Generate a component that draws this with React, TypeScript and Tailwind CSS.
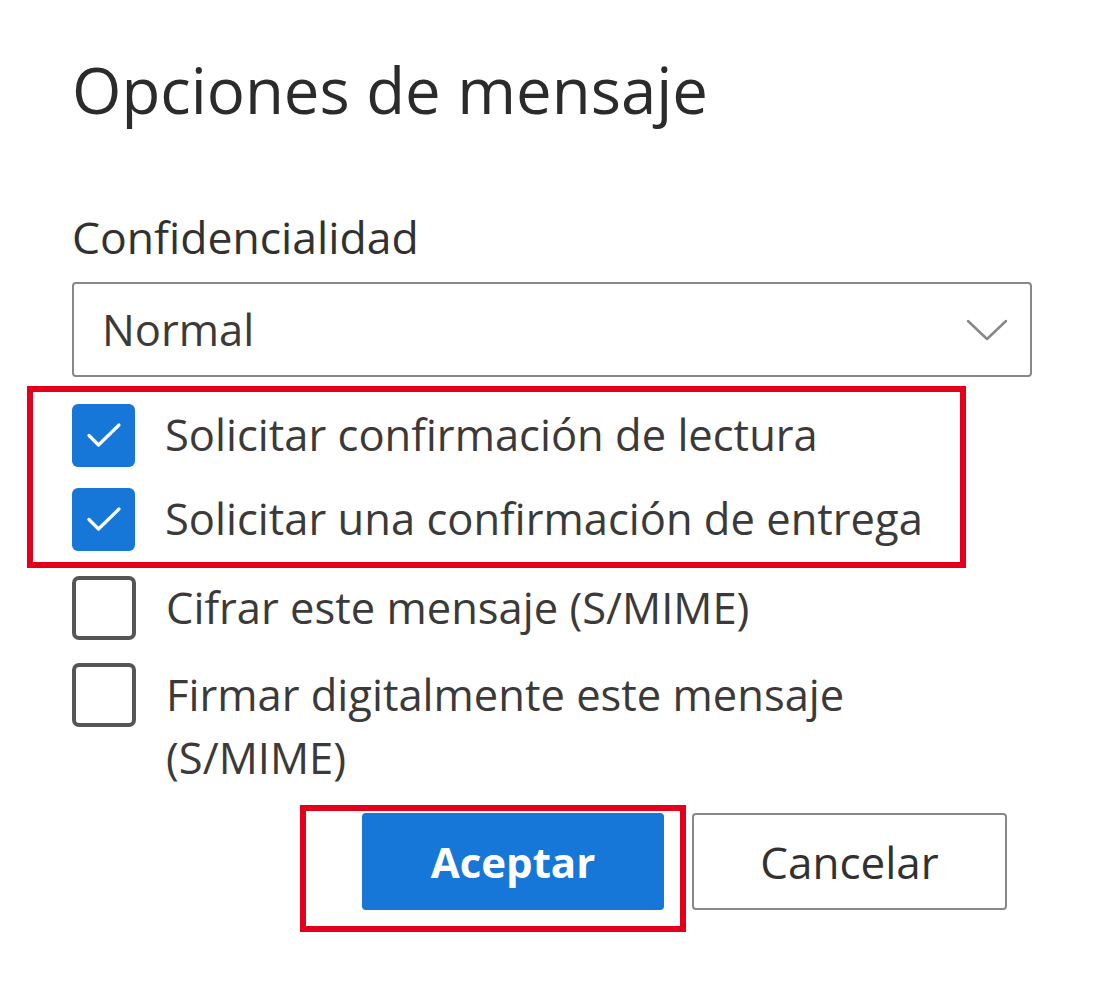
import { ReactNode } from "react";

function CheckBox({ checked }: { checked?: boolean }) {
  if (checked) {
    return (
      <div className="w-[63px] h-[63px] shrink-0 rounded-[6px] bg-[#1677d8] flex items-center justify-center">
        <svg width="36" height="28" viewBox="0 0 36 28" fill="none">
          <path d="M3 14.5 L12.5 24 L33 4" stroke="white" strokeWidth="3.2" strokeLinecap="round" strokeLinejoin="round" />
        </svg>
      </div>
    );
  }
  return <div className="w-[64px] h-[64px] shrink-0 rounded-[7px] border-[4px] border-[#555555] bg-white"></div>;
}

function Row({ checked, children }: { checked?: boolean; children: ReactNode }) {
  return (
    <div className="h-[86px] flex items-center gap-[30px]">
      <CheckBox checked={checked} />
      <span className="text-[43.5px] leading-[50px] text-[#3b3a39]">{children}</span>
    </div>
  );
}

export default function App() {
  return (
    <div className="w-[1102px] h-[985px] bg-white pl-[72px] pt-[54px] font-['Open_Sans',_'Noto_Sans',_sans-serif] text-[#323130] overflow-hidden">
      <h1 className="text-[63.5px] leading-[72px] text-[#2b2b2b]">Opciones de mensaje</h1>

      <p className="mt-[86px] text-[44.5px] leading-[50px] text-[#323130]">Confidencialidad</p>

      <div className="mt-[20px] w-[960px] h-[95px] border-[2px] border-[#8a8886] rounded-[4px] flex items-center justify-between pl-[28px] pr-[22px]">
        <span className="text-[43.5px] leading-[50px] text-[#3b3a39]">Normal</span>
        <svg width="42" height="22" viewBox="0 0 42 22" fill="none">
          <path d="M2 2 L21 20 L40 2" stroke="#8a8886" strokeWidth="2.5" strokeLinecap="round" strokeLinejoin="round" />
        </svg>
      </div>

      <div className="mt-[9px] -ml-[45px] w-[939px] border-[6px] border-[#e4001b] pl-[39px] -mb-[3px]">
        <Row checked>Solicitar confirmación de lectura</Row>
        <div className="-mt-[2px]">
          <Row checked>Solicitar una confirmación de entrega</Row>
        </div>
      </div>

      <Row>Cifrar este mensaje (S/MIME)</Row>

      <div className="flex items-start gap-[30px] pt-[12px]">
        <CheckBox />
        <span className="text-[43.5px] leading-[63px] text-[#3b3a39] w-[740px]">
          Firmar digitalmente este mensaje (S/MIME)
        </span>
      </div>

      <div className="mt-[16px] ml-[228px] flex items-start">
        <div className="w-[386px] h-[127px] border-[6px] border-[#e4001b] pl-[56px] pt-[2px]">
          <button className="w-[302px] h-[97px] rounded-[4px] bg-[#1677d8] text-white text-[42px] font-bold">
            Aceptar
          </button>
        </div>
        <button className="ml-[6px] mt-[8px] w-[315px] h-[97px] rounded-[4px] border-[2px] border-[#8a8886] bg-white text-[44px] text-[#323130]">
          Cancelar
        </button>
      </div>
    </div>
  );
}
